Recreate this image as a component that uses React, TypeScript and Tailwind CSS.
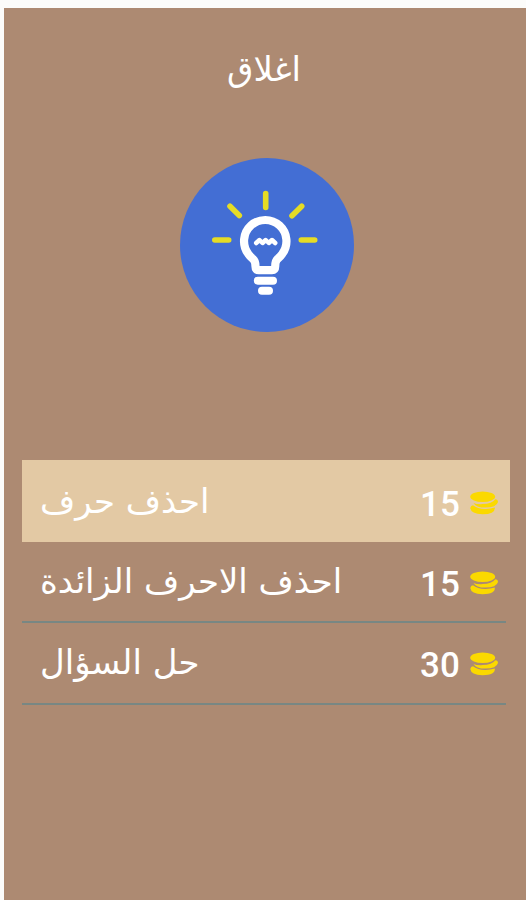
function Bulb() {
  return (
    <svg viewBox="0 0 174 174" className="h-[174px] w-[174px]" fill="none" strokeLinecap="round" strokeLinejoin="round">
      <circle cx="87" cy="87" r="87" fill="#436ed4" />
      <path
        d="M85.700 35.500V49.500M50 48.300L59.300 57.500M121.700 48.300L112 57.800M34.800 82H48.700M121.300 82H134.700"
        stroke="#e5dc25"
        strokeWidth="5.600"
      />
      <path
        d="M75.500 108.500Q75.500 103 73 101Q70 98.500 68.500 96.200A21.200 21.200 0 1 1 102 96.200Q100.500 98.500 97.500 101Q95.200 103 95.200 108.500Q95.200 112.200 92 112.200H78.700Q75.500 112.200 75.500 108.500Z"
        stroke="#fff"
        strokeWidth="8.200"
      />
      <path d="M77.800 122.700H93M82 132.700H89" stroke="#fff" strokeWidth="8" />
      <path d="M76.200 85L79.500 82L82.500 85L85.700 82L88.800 85L92 82L95.200 85" stroke="#fff" strokeWidth="4.500" />
    </svg>
  );
}

function Coins() {
  return (
    <svg viewBox="0 0 28 24" className="mb-px h-6 w-7 shrink-0" fill="#fbd900">
      <ellipse cx="12.700" cy="5.700" rx="12.500" ry="5.200" />
      <path d="M3.500 11.900Q6 13.300 12.500 13.100Q22 12.700 25.300 8.200Q28 8.500 28 11Q26.500 16.500 15.500 16.600Q6 16.600 3.500 11.900Z" />
      <path d="M0.300 17Q0.800 14.300 3 14.300Q7.500 18.100 15.500 18Q20.500 17.800 24.800 16.600Q25.500 23.300 12.500 23.300Q1 22.800 0.300 17Z" />
    </svg>
  );
}

const label = "block whitespace-nowrap font-['DejaVu_Sans',sans-serif] text-[34px] leading-[40px]";
const price = "mt-1 w-[38px] text-right font-['Roboto',sans-serif] text-[35px] font-medium leading-[40px]";

export default function App() {
  return (
    <div className="h-[900px] w-[526px] overflow-hidden bg-[#fcfcfa] pl-1 pt-2">
      <main className="flex h-[892px] flex-col items-start bg-[#ad8a72] text-white">
        <h1 dir="rtl" className="ml-[223px] mt-[41px] whitespace-nowrap font-['DejaVu_Sans',sans-serif] text-[34px] leading-[40px]">
          اغلاق
        </h1>
        <div className="ml-44 mt-[69px]">
          <Bulb />
        </div>
        <section className="ml-[18px] mt-32 w-[488px]">
          <div className="flex h-[82px] items-start justify-between bg-[#e3c9a4] pl-[18px] pr-3 pt-[21px]">
            <span dir="rtl" className={label}>احذف حرف</span>
            <span className="flex items-center gap-3">
              <b className={price}>15</b>
              <Coins />
            </span>
          </div>
          <div className="flex h-[81px] w-[484px] items-start justify-between border-b-2 border-[#788783] pl-[18px] pr-2 pt-[19px]">
            <span dir="rtl" className={label}>احذف الاحرف الزائدة</span>
            <span className="flex items-center gap-3">
              <b className={price}>15</b>
              <Coins />
            </span>
          </div>
          <div className="flex h-[82px] w-[484px] items-start justify-between border-b-2 border-[#788783] pl-[18px] pr-2 pt-[19px]">
            <span dir="rtl" className={label}>حل السؤال</span>
            <span className="flex items-center gap-3">
              <b className={price}>30</b>
              <Coins />
            </span>
          </div>
        </section>
      </main>
    </div>
  );
}
